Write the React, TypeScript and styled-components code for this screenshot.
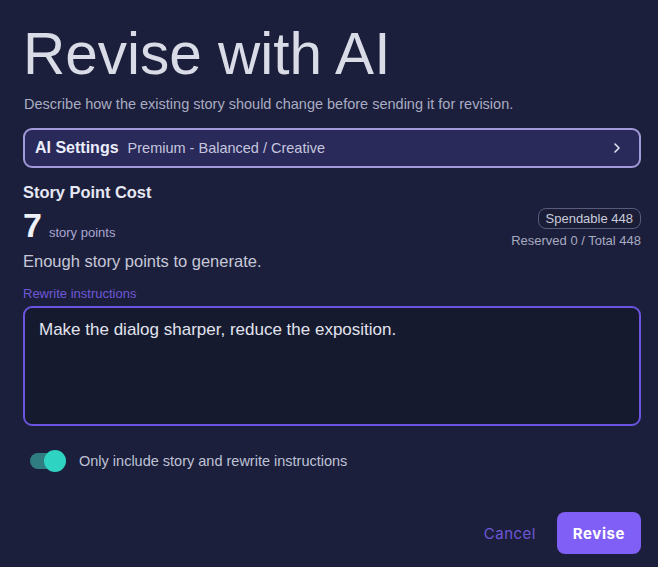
import React, { useState } from "react";
import styled, { createGlobalStyle } from "styled-components";

const GlobalStyle = createGlobalStyle`
  html, body {
    margin: 0;
    padding: 0;
    background: #1c1f3b;
  }
  body {
    font-family: "Liberation Sans", Arial, sans-serif;
    color: #d7d9e6;
  }
`;

const Dialog = styled.div`
  box-sizing: border-box;
  width: 658px;
  height: 567px;
  padding: 19px 17px 13px 23px;
  display: flex;
  flex-direction: column;
  background: #1c1f3b;
`;

const Title = styled.h1`
  margin: 0;
  font-size: 58.5px;
  font-weight: 400;
  line-height: 70px;
  color: #d9dbe7;
`;

const Subtitle = styled.p`
  margin: 6px 0 0 1px;
  font-size: 14.5px;
  line-height: 18px;
  color: #a9acc2;
`;

const SettingsButton = styled.button`
  margin-top: 15px;
  box-sizing: border-box;
  width: 100%;
  height: 40px;
  display: flex;
  align-items: center;
  gap: 9px;
  padding: 0 14px 0 10px;
  border: 2px solid #a39ad9;
  border-radius: 9px;
  background: #29295a;
  font-family: inherit;
  cursor: pointer;
`;

const SettingsName = styled.span`
  font-size: 16px;
  font-weight: 700;
  color: #eceefa;
`;

const SettingsValue = styled.span`
  font-size: 14.5px;
  color: #c5c6de;
  flex: 1;
  text-align: left;
`;

const CostRow = styled.div`
  margin-top: 14px;
  display: flex;
  justify-content: space-between;
  align-items: flex-end;
`;

const CostInfo = styled.div`
  display: flex;
  flex-direction: column;
`;

const SectionTitle = styled.div`
  font-size: 16.4px;
  font-weight: 700;
  line-height: 20px;
  color: #e6e8f3;
`;

const PointsLine = styled.div`
  margin-top: 4px;
  display: flex;
  align-items: baseline;
  gap: 7px;
`;

const PointsNumber = styled.span`
  font-size: 34px;
  font-weight: 700;
  line-height: 38px;
  color: #eef0f8;
`;

const PointsUnit = styled.span`
  font-size: 13px;
  color: #aaa7d2;
`;

const StatusText = styled.div`
  margin-top: 7px;
  font-size: 16.5px;
  line-height: 20px;
  color: #c6c8d8;
`;

const Balance = styled.div`
  display: flex;
  flex-direction: column;
  align-items: flex-end;
  gap: 4px;
  padding-bottom: 23px;
`;

const Badge = styled.span`
  box-sizing: border-box;
  height: 21px;
  display: inline-flex;
  align-items: center;
  padding: 0 7px;
  border: 1px solid #575b7c;
  border-radius: 8px;
  background: #1a1d35;
  font-size: 13px;
  color: #c9cbdb;
`;

const BalanceNote = styled.span`
  font-size: 13px;
  color: #a7aac0;
`;

const FieldLabel = styled.label`
  margin-top: 15px;
  font-size: 13px;
  line-height: 15px;
  color: #6e58d8;
`;

const TextArea = styled.textarea`
  margin-top: 5px;
  box-sizing: border-box;
  width: 100%;
  height: 120px;
  padding: 11px 14px;
  border: 2px solid #6a54e0;
  border-radius: 9px;
  background: #151a2e;
  resize: none;
  font-family: "Liberation Sans", Arial, sans-serif;
  font-size: 17px;
  line-height: 22px;
  color: #e2e3ee;
  caret-color: #7b64f0;
  outline: none;
`;

const ToggleRow = styled.label`
  margin-top: 27px;
  margin-left: 7px;
  display: flex;
  align-items: center;
  gap: 15px;
  font-size: 14.5px;
  color: #bfc2d6;
  cursor: pointer;
`;

const Track = styled.span<{ $on: boolean }>`
  position: relative;
  width: 34px;
  height: 16px;
  border-radius: 8px;
  background: ${(p) => (p.$on ? "#2f7d80" : "#454a68")};
`;

const Knob = styled.span<{ $on: boolean }>`
  position: absolute;
  top: -3px;
  left: ${(p) => (p.$on ? "14px" : "-2px")};
  width: 22px;
  height: 22px;
  border-radius: 50%;
  background: #2fd3c2;
`;

const Actions = styled.div`
  margin-top: auto;
  display: flex;
  justify-content: flex-end;
  align-items: center;
  gap: 21px;
`;

const CancelButton = styled.button`
  border: none;
  background: none;
  padding: 0;
  font-family: Inter, "Liberation Sans", sans-serif;
  font-size: 15px;
  letter-spacing: 0.5px;
  color: #6c57d8;
  cursor: pointer;
`;

const PrimaryButton = styled.button`
  box-sizing: border-box;
  width: 84px;
  height: 42px;
  border: none;
  border-radius: 8px;
  background: #7f5ff5;
  font-family: Inter, "Liberation Sans", sans-serif;
  font-size: 15px;
  font-weight: 700;
  letter-spacing: 0.6px;
  color: #ffffff;
  cursor: pointer;
`;

function Chevron() {
  return (
    <svg width="16" height="16" viewBox="0 0 24 24" fill="none" stroke="#e4e5f2" strokeWidth="2.4" strokeLinecap="round" strokeLinejoin="round">
      <path d="m9 18 6-6-6-6" />
    </svg>
  );
}

export default function App() {
  const [text, setText] = useState("Make the dialog sharper, reduce the exposition.");
  const [onlyStory, setOnlyStory] = useState(true);

  return (
    <>
      <GlobalStyle />
      <Dialog>
        <Title>Revise with AI</Title>
        <Subtitle>Describe how the existing story should change before sending it for revision.</Subtitle>

        <SettingsButton>
          <SettingsName>AI Settings</SettingsName>
          <SettingsValue>Premium - Balanced / Creative</SettingsValue>
          <Chevron />
        </SettingsButton>

        <CostRow>
          <CostInfo>
            <SectionTitle>Story Point Cost</SectionTitle>
            <PointsLine>
              <PointsNumber>7</PointsNumber>
              <PointsUnit>story points</PointsUnit>
            </PointsLine>
            <StatusText>Enough story points to generate.</StatusText>
          </CostInfo>
          <Balance>
            <Badge>Spendable 448</Badge>
            <BalanceNote>Reserved 0 / Total 448</BalanceNote>
          </Balance>
        </CostRow>

        <FieldLabel htmlFor="rewrite">Rewrite instructions</FieldLabel>
        <TextArea id="rewrite" value={text} onChange={(e) => setText(e.target.value)} />

        <ToggleRow onClick={() => setOnlyStory(!onlyStory)}>
          <Track $on={onlyStory}>
            <Knob $on={onlyStory} />
          </Track>
          Only include story and rewrite instructions
        </ToggleRow>

        <Actions>
          <CancelButton>Cancel</CancelButton>
          <PrimaryButton>Revise</PrimaryButton>
        </Actions>
      </Dialog>
    </>
  );
}
